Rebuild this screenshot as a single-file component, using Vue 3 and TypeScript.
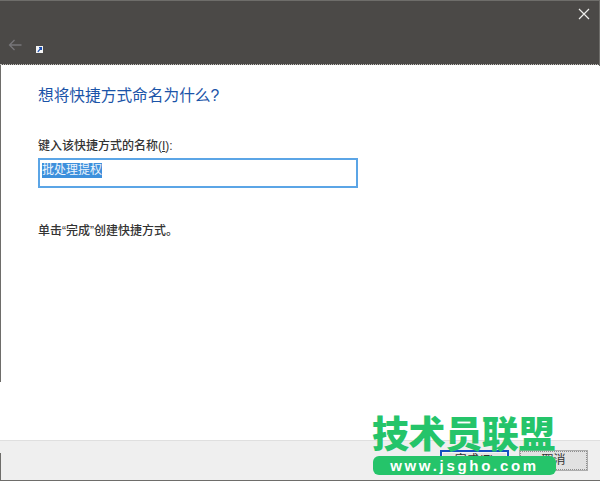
<script setup lang="ts">
const title = '想将快捷方式命名为什么?'
const fieldLabel = '键入该快捷方式的名称'
const fieldValue = '批处理提权'
const hint = '单击“完成”创建快捷方式。'
</script>

<template>
  <div class="window">
    <header class="titlebar">
      <button class="close" aria-label="关闭">
        <svg width="12" height="12" viewBox="0 0 12 12"><path d="M1 1 L11 11 M11 1 L1 11" stroke="#eeeeec" stroke-width="1.2" fill="none" /></svg>
      </button>
      <div class="nav">
        <svg class="back" width="14" height="12" viewBox="0 0 14 12"><path d="M13.5 6 H1.5 M6.5 1 L1.5 6 L6.5 11" stroke="#77767a" stroke-width="1.3" fill="none" /></svg>
        <span class="shortcut">
          <svg width="7" height="7" viewBox="0 0 7 7"><rect width="7" height="7" fill="#f4f4f4" /><path d="M1.8 5.8 L5 2 M3 1.6 H5.4 V4" stroke="#1c4fb0" stroke-width="1.2" fill="none" /></svg>
        </span>
      </div>
    </header>

    <main class="content">
      <h1 class="title">{{ title }}</h1>
      <label class="label">{{ fieldLabel }}(<u>I</u>):</label>
      <div class="input"><span class="selected">{{ fieldValue }}</span></div>
      <p class="hint">{{ hint }}</p>
    </main>

    <footer class="footer">
      <button class="btn primary">完成(F)</button>
      <button class="btn cancel">取消</button>
    </footer>

    <i class="edge-left-top"></i>
    <i class="edge-left-bottom"></i>
    <i class="edge-right"></i>

    <div class="watermark">
      <div class="wm-title">技术员联盟</div>
      <div class="wm-url">www.jsgho.com</div>
    </div>
  </div>
</template>

<style>
html, body { margin: 0; background: #fff; }
</style>

<style scoped>
.window {
  position: relative;
  width: 600px;
  height: 481px;
  display: flex;
  flex-direction: column;
  overflow: hidden;
  background: #fff;
  font-family: "Liberation Sans", "Noto Sans CJK SC", sans-serif;
  color: #333;
}
.titlebar {
  height: 65px;
  flex: none;
  box-sizing: border-box;
  background: #4b4947;
  border-top: 1px solid #6e6d6a;
  border-bottom: 1px dotted #bdbcb8;
  display: flex;
  flex-direction: column;
  justify-content: space-between;
}
.close {
  align-self: flex-end;
  margin: 7px 10px 0 0;
  padding: 0;
  border: 0;
  background: none;
  display: flex;
}
.nav {
  display: flex;
  align-items: center;
  padding: 0 0 13px 8px;
  height: 12px;
}
.back { flex: none; }
.shortcut {
  display: flex;
  margin: 9px 0 0 14px;
}
.content {
  flex: 1;
  padding: 21px 0 0 38px;
  display: flex;
  flex-direction: column;
  align-items: flex-start;
}
.title {
  margin: 0;
  font-size: 15.7px;
  line-height: 20px;
  font-weight: 400;
  color: #1b54a8;
}
.label {
  margin-top: 32px;
  font-size: 12px;
  line-height: 16px;
  color: #333;
  font-weight: 500;
}
.input {
  margin-top: 4px;
  width: 320px;
  height: 30px;
  box-sizing: border-box;
  border: 2px solid #5ba5e6;
  padding: 3px 2px;
  background: #fff;
  display: flex;
  align-items: flex-start;
}
.selected {
  background: #3d90dc;
  color: #eef5fc;
  font-size: 12px;
  line-height: 15px;
}
.hint {
  margin: 35px 0 0;
  font-size: 12px;
  line-height: 16px;
  color: #333;
  font-weight: 500;
}
.footer {
  height: 41px;
  flex: none;
  box-sizing: border-box;
  background: #efefef;
  border-top: 1px solid #dfdfdf;
  border-bottom: 1px solid #6e6d6a;
  padding: 9px 12px 0 0;
  display: flex;
  justify-content: flex-end;
  align-items: flex-start;
  gap: 10px;
}
.btn {
  width: 69px;
  height: 21px;
  padding: 0;
  box-sizing: border-box;
  font-family: inherit;
  font-size: 12px;
  line-height: 17px;
  color: #333;
}
.primary {
  background: #e4e4e4;
  border: 2px solid #1550c0;
  outline: 1px solid #f4f4f4;
  outline-offset: -3px;
}
.cancel {
  background: #e1e1e1;
  border: 1px solid #adadad;
  outline: 1px dotted #8d8d8d;
  outline-offset: -2px;
}
.edge-left-top, .edge-left-bottom, .edge-right {
  position: absolute;
  width: 1px;
  background: #6e6d6a;
}
.edge-left-top { left: 0; top: 65px; height: 317px; }
.edge-left-bottom { left: 0; top: 453px; height: 28px; }
.edge-right { right: 0; top: 0; height: 66px; }
.watermark {
  position: absolute;
  left: 372px;
  top: 412px;
  width: 197px;
  display: flex;
  flex-direction: column;
  align-items: flex-start;
}
.wm-title {
  font-family: "Noto Sans CJK SC", sans-serif;
  font-size: 37px;
  line-height: 40px;
  font-weight: 900;
  letter-spacing: -0.4px;
  color: #25c46a;
  white-space: nowrap;
}
.wm-url {
  margin: 4px 0 0 1px;
  width: 183px;
  height: 19px;
  border-radius: 6px;
  background: #25c46a;
  color: #fff;
  font-size: 15px;
  line-height: 19px;
  font-weight: 700;
  letter-spacing: 2.7px;
  text-align: center;
  white-space: nowrap;
}
</style>
